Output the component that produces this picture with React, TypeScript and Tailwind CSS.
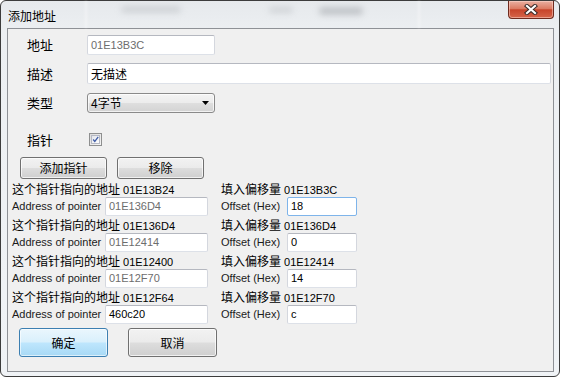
import type { ReactNode } from "react";

const cjk = "font-['Noto_Sans_CJK_SC','Noto_Sans',sans-serif]";
const latin = "font-['Liberation_Sans','Noto_Sans_CJK_SC',sans-serif]";

const pointers = [
  { target: "01E13B24", address: "01E136D4", base: "01E13B3C", offset: "18", focused: true, enabled: false },
  { target: "01E136D4", address: "01E12414", base: "01E136D4", offset: "0", focused: false, enabled: false },
  { target: "01E12400", address: "01E12F70", base: "01E12414", offset: "14", focused: false, enabled: false },
  { target: "01E12F64", address: "460c20", base: "01E12F70", offset: "c", focused: false, enabled: true },
];

function TextBox({
  value,
  className,
  muted,
  focused,
}: {
  value: string;
  className: string;
  muted?: boolean;
  focused?: boolean;
}) {
  return (
    <div
      className={`flex items-center bg-white pl-[3px] rounded-[2px] border ${
        focused
          ? "border-[#7eb4ea]"
          : "border-[#b5b8c0] border-b-[#dde1e8] border-x-[#d4d7de]"
      } ${muted ? "text-[#6d6d6d]" : "text-black"} ${className}`}
    >
      {value}
    </div>
  );
}

function Win7Button({
  children,
  className,
  primary,
}: {
  children: ReactNode;
  className: string;
  primary?: boolean;
}) {
  return (
    <div
      className={`flex items-center justify-center rounded-[3px] border text-[12px] text-black ${cjk} ${
        primary
          ? "border-[#3c7fb1] bg-[linear-gradient(#eaf6fd_0%,#d9f0fc_48%,#bee6fd_52%,#a7d9f5_100%)] shadow-[inset_0_0_0_1px_rgba(255,255,255,0.6)]"
          : "border-[#707070] bg-[linear-gradient(#f2f2f2_0%,#ebebeb_48%,#dddddd_52%,#cfcfcf_100%)] shadow-[inset_0_0_0_1px_rgba(255,255,255,0.7)]"
      } ${className}`}
    >
      {children}
    </div>
  );
}

function FieldLabel({ children }: { children: ReactNode }) {
  return (
    <div className={`w-[79px] pl-[19px] text-[13px] text-black ${cjk}`}>
      {children}
    </div>
  );
}

export default function App() {
  return (
    <div className="w-[561px] h-[378px] bg-white">
      <div className="w-[560px] h-[377px] rounded-[6px] border border-[#3c3c3c] bg-[linear-gradient(#e6e9ec_0%,#eceff2_8%,#f0f3f6_100%)] flex flex-col">
        {/* title bar */}
        <div className="relative h-[27px] flex justify-between">
          <div className="absolute left-[120px] top-[5px] w-[60px] h-[7px] rounded-full bg-[#b8bcc0] blur-[3px] opacity-50" />
          <div className="absolute left-[268px] top-[6px] w-[24px] h-[6px] rounded-full bg-[#b8bcc0] blur-[3px] opacity-50" />
          <div className="absolute left-[318px] top-[6px] w-[44px] h-[8px] rounded-full bg-[#9a9ea3] blur-[3px] opacity-50" />
          <div className="absolute left-[84px] top-0 w-[2px] h-[27px] bg-white opacity-40 blur-[1px]" />
          <div className="absolute left-[417px] top-0 w-[2px] h-[27px] bg-white opacity-40 blur-[1px]" />
          <span className={`relative self-center pl-[7px] pt-[2px] text-[12px] text-black ${cjk}`}>
            添加地址
          </span>
          <div className="relative mr-[5px] w-[46px] h-[18px] rounded-b-[4px] border border-t-0 border-[#6e2a1e] bg-[linear-gradient(#eab0a2_0%,#dc7b63_45%,#c7442b_52%,#d5654a_100%)] shadow-[inset_0_0_0_1px_rgba(255,220,210,0.5)] flex items-center justify-center">
            <svg width="14" height="11" viewBox="0 0 14 11">
              <path d="M3 2 L11 9 M11 2 L3 9" stroke="#3a2a28" strokeWidth="4.2" strokeLinecap="square" />
              <path d="M3 2 L11 9 M11 2 L3 9" stroke="#ffffff" strokeWidth="2.2" strokeLinecap="square" />
            </svg>
          </div>
        </div>

        {/* client area */}
        <div className="ml-[6px] w-[547px] h-[344px] border border-[#8e9196] bg-[#f0f0f0] flex flex-col">
          <div className="mt-[6px] h-[20px] flex items-center">
            <FieldLabel>地址</FieldLabel>
            <TextBox value="01E13B3C" muted className={`w-[128px] h-[20px] text-[11px] ${latin}`} />
          </div>

          <div className="mt-[8px] h-[21px] flex items-center">
            <FieldLabel>描述</FieldLabel>
            <TextBox value="无描述" className={`flex-1 mr-[2px] h-[21px] pl-[1px] text-[12px] ${cjk}`} />
          </div>

          <div className="mt-[9px] h-[20px] flex items-center">
            <FieldLabel>类型</FieldLabel>
            <div className="w-[128px] h-[20px] rounded-[3px] border border-[#8a8a8a] bg-[linear-gradient(#f4f4f4_0%,#ececec_48%,#dedede_52%,#d3d3d3_100%)] shadow-[inset_0_0_0_1px_rgba(255,255,255,0.7)] flex items-center justify-between pl-[3px] pr-[5px]">
              <span className={`text-[12px] text-black ${cjk}`}>4字节</span>
              <svg width="7" height="4" viewBox="0 0 7 4">
                <path d="M0 0 H7 L3.5 4 Z" fill="#000" />
              </svg>
            </div>
          </div>

          <div className="mt-[20px] h-[13px] flex items-center">
            <FieldLabel>指针</FieldLabel>
            <div className="ml-[2px] w-[13px] h-[13px] border border-[#8e8f8f] bg-[linear-gradient(135deg,#dcdcdc,#f5f5f5)] flex items-center justify-center">
              <div className="w-[9px] h-[9px] border border-[#b5b8c3] bg-[linear-gradient(135deg,#e2e5ec,#fdfdfd)] flex items-center justify-center">
                <svg width="9" height="9" viewBox="0 0 9 9" className="-mt-[1px]">
                  <path d="M1.5 4.5 L3.6 7 L8 1.2" stroke="#3c5aa6" strokeWidth="1.6" fill="none" />
                </svg>
              </div>
            </div>
          </div>

          <div className="mt-[11px] h-[22px] flex pl-[12px] gap-[10px]">
            <Win7Button className="w-[87px] h-[22px]">添加指针</Win7Button>
            <Win7Button className="w-[87px] h-[22px]">移除</Win7Button>
          </div>

          <div className="mt-[4px] flex flex-col gap-[3px]">
            {pointers.map((p) => (
              <div key={p.target} className="flex flex-col">
                <div className="h-[14px] flex items-center text-black">
                  <div className="w-[213px] pl-[4px] flex items-baseline">
                    <span className={`text-[12px] leading-[14px] ${cjk}`}>这个指针指向的地址</span>
                    <span className={`ml-[3px] text-[11px] ${latin}`}>{p.target}</span>
                  </div>
                  <div className="flex items-baseline">
                    <span className={`text-[12px] leading-[14px] ${cjk}`}>填入偏移量</span>
                    <span className={`ml-[3px] text-[11px] ${latin}`}>{p.base}</span>
                  </div>
                </div>
                <div className={`h-[19px] flex items-center text-[11px] ${latin}`}>
                  <div className="w-[213px] pl-[4px] flex items-center">
                    <span className="w-[93px] text-[#1b1b1b]">Address of pointer</span>
                    <TextBox
                      value={p.address}
                      muted={!p.enabled}
                      className="w-[103px] h-[19px]"
                    />
                  </div>
                  <div className="flex items-center">
                    <span className="w-[66px] text-[#1b1b1b]">Offset (Hex)</span>
                    <TextBox value={p.offset} focused={p.focused} className="w-[70px] h-[19px]" />
                  </div>
                </div>
              </div>
            ))}
          </div>

          <div className="mt-[4px] flex pl-[11px] gap-[20px]">
            <Win7Button primary className="w-[89px] h-[29px]">确定</Win7Button>
            <Win7Button className="w-[89px] h-[29px]">取消</Win7Button>
          </div>
        </div>
      </div>
    </div>
  );
}
